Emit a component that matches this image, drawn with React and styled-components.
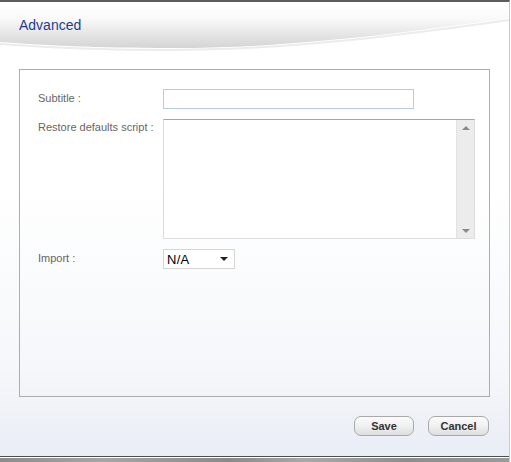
import React from 'react';
import styled, { createGlobalStyle } from 'styled-components';

const GlobalStyle = createGlobalStyle`
  html, body {
    margin: 0;
    padding: 0;
    background: #ffffff;
  }
  body {
    font-family: "Liberation Sans", Arial, sans-serif;
  }
`;

const Dialog = styled.div`
  width: 510px;
  height: 462px;
  box-sizing: border-box;
  border-top: 2px solid #5c5c5c;
  border-right: 1px solid #c9c9c9;
  display: flex;
  flex-direction: column;
  background: linear-gradient(to bottom, #ffffff 0%, #ffffff 40%, #f5f7fa 80%, #e8ecf5 100%);
  overflow: hidden;
`;

const Header = styled.div`
  position: relative;
  height: 45px;
  flex-shrink: 0;
`;

const Swoosh = styled.svg`
  position: absolute;
  left: 0;
  top: 0;
  width: 510px;
  height: 50px;
`;

const Title = styled.h1`
  position: relative;
  margin: 0;
  padding: 15px 0 0 19px;
  font-size: 14px;
  line-height: 16px;
  font-weight: normal;
  color: #1f3c8e;
`;

const Main = styled.div`
  padding: 22px 0 0 19px;
`;

const Fieldset = styled.div`
  width: 471px;
  height: 328px;
  box-sizing: border-box;
  border: 1px solid #adadad;
  padding: 19px 18px;
  display: grid;
  grid-template-columns: 125px auto;
  grid-auto-rows: min-content;
  row-gap: 10px;
  align-content: start;
`;

const Label = styled.label`
  font-size: 11px;
  color: #666666;
  line-height: 13px;
  padding-top: ${p => p.$top || 3}px;
`;

const TextInput = styled.div`
  width: 251px;
  height: 20px;
  box-sizing: border-box;
  border: 1px solid #b9cbe3;
  background: #ffffff;
`;

const AreaBox = styled.div`
  width: 312px;
  height: 120px;
  box-sizing: border-box;
  border: 1px solid #dcdcdc;
  border-top-color: #a6a6a6;
  background: #ffffff;
  display: flex;
`;

const AreaText = styled.div`
  flex: 1;
`;

const ScrollTrack = styled.div`
  width: 17px;
  background: #ececec;
  border-left: 1px solid #e2e2e2;
  display: flex;
  flex-direction: column;
  justify-content: space-between;
  align-items: center;
  padding: 6px 0 5px;
`;

const Arrow = styled.div`
  width: 0;
  height: 0;
  border-left: 4px solid transparent;
  border-right: 4px solid transparent;
  ${p => p.$down
    ? 'border-top: 4px solid #8a8a8a;'
    : 'border-bottom: 4px solid #8a8a8a;'}
`;

const Select = styled.div`
  width: 72px;
  height: 20px;
  box-sizing: border-box;
  border: 1px solid #d5d5d5;
  background: #ffffff;
  display: flex;
  align-items: center;
  justify-content: space-between;
  padding: 0 6px 0 3px;
  font-size: 13px;
  color: #000000;
  letter-spacing: 0.3px;
`;

const Caret = styled.span`
  width: 0;
  height: 0;
  border-left: 4px solid transparent;
  border-right: 4px solid transparent;
  border-top: 4px solid #222222;
`;

const ButtonRow = styled.div`
  display: flex;
  justify-content: flex-end;
  gap: 14px;
  padding: 19px 20px 0 0;
`;

const Button = styled.button`
  width: ${p => p.$w}px;
  height: 20px;
  box-sizing: border-box;
  border: 1px solid #a9a9a9;
  border-radius: 7px;
  background: linear-gradient(to bottom, #fbfbfb 0%, #f0f0f0 50%, #dedede 100%);
  font-family: "Liberation Sans", Arial, sans-serif;
  font-size: 11px;
  font-weight: bold;
  color: #333333;
  padding: 0;
  cursor: pointer;
`;

const Spacer = styled.div`
  flex: 1;
`;

const Footer = styled.div`
  height: 5px;
  flex-shrink: 0;
  border-top: 1px solid #4e4e4e;
  box-shadow: inset 0 1px 0 #ffffff;
  background: linear-gradient(to right, #8c8c8c, #a6a6a6 20%, #8a8a8a 45%, #a9a9a9 60%, #8d8d8d 80%, #9a9a9a);
`;

export default function App() {
  return (
    <>
      <GlobalStyle />
      <Dialog>
        <Header>
          <Swoosh viewBox="0 0 510 50" preserveAspectRatio="none">
            <defs>
              <linearGradient id="sw" x1="0" y1="0" x2="0" y2="46" gradientUnits="userSpaceOnUse">
                <stop offset="0" stopColor="#ffffff" />
                <stop offset="0.35" stopColor="#fafafa" />
                <stop offset="1" stopColor="#d4d4d4" />
              </linearGradient>
            </defs>
            <path d="M0 0 H510 V16 C 420 28, 300 46, 170 46 C 100 46, 40 43, 0 40 Z" fill="url(#sw)" />
            <path d="M0 42 C 40 45, 100 48, 170 48 C 300 48, 420 30, 510 18" fill="none" stroke="#ececec" strokeWidth="2" />
          </Swoosh>
          <Title>Advanced</Title>
        </Header>
        <Main>
          <Fieldset>
            <Label>Subtitle :</Label>
            <TextInput />
            <Label $top={2}>Restore defaults script :</Label>
            <AreaBox>
              <AreaText />
              <ScrollTrack>
                <Arrow />
                <Arrow $down />
              </ScrollTrack>
            </AreaBox>
            <Label>Import :</Label>
            <Select>
              <span>N/A</span>
              <Caret />
            </Select>
          </Fieldset>
        </Main>
        <ButtonRow>
          <Button $w={60}>Save</Button>
          <Button $w={61}>Cancel</Button>
        </ButtonRow>
        <Spacer />
        <Footer />
      </Dialog>
    </>
  );
}
